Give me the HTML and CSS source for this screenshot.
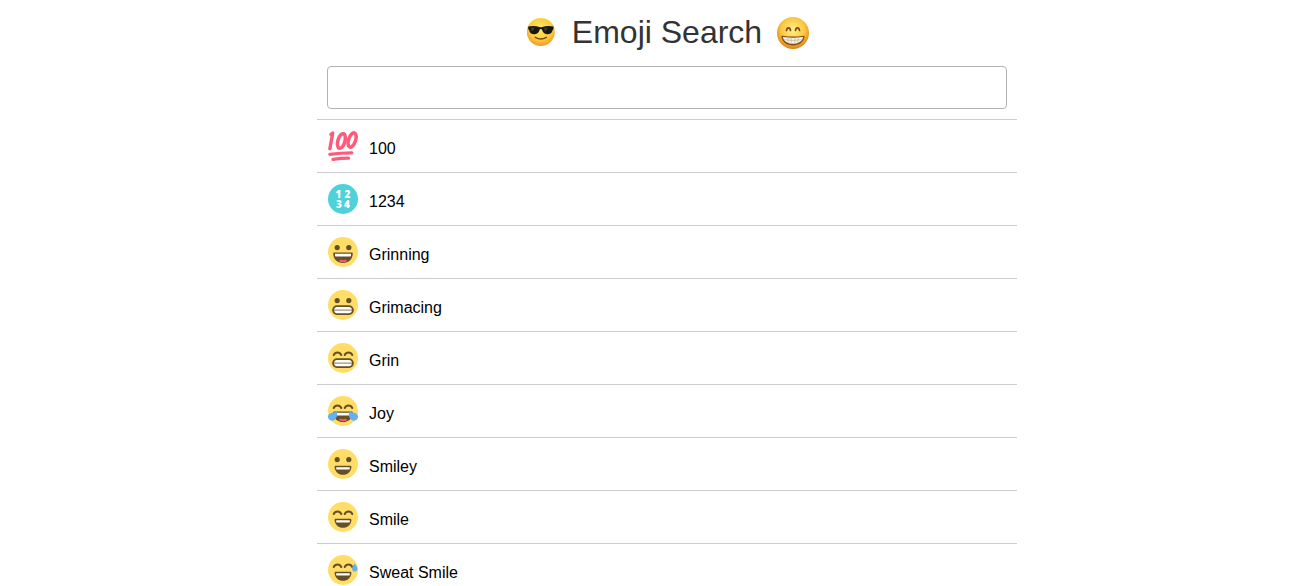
FILE: index.html
```html
<!DOCTYPE html>
<html lang="en">
<head>
<meta charset="utf-8">
<meta name="viewport" content="width=device-width, initial-scale=1">
<title>Emoji Search</title>
<link rel="stylesheet" href="styles.css">
</head>
<body>
<svg class="defs" aria-hidden="true">
  <defs>
    <radialGradient id="gold" cx=".5" cy=".38" r=".62">
      <stop offset="0" stop-color="#ffe864"/><stop offset=".65" stop-color="#fdcb3c"/><stop offset="1" stop-color="#f0982c"/>
    </radialGradient>
    <radialGradient id="amber" cx=".5" cy=".4" r=".62">
      <stop offset="0" stop-color="#fff08a"/><stop offset=".6" stop-color="#fbc740"/><stop offset="1" stop-color="#d97a10"/>
    </radialGradient>
    <g id="face"><circle cx="15" cy="15" r="15" fill="#ffdd67"/></g>
    <g id="dots" fill="#664e27"><circle cx="9.2" cy="10.6" r="2.6"/><circle cx="20.8" cy="10.6" r="2.6"/></g>
    <g id="arcs" fill="none" stroke="#664e27" stroke-width="2" stroke-linecap="round">
      <path d="M5.700 12C7.300 8.600 11.700 8.600 13.300 12M16.700 12C18.300 8.600 22.700 8.600 24.300 12"/>
    </g>
    <g id="open">
      <path d="M6.500 15.500h17c.9 0 1.300.5 1.300 1.200-.4 5.500-3.800 9.300-9.800 9.300s-9.400-3.800-9.800-9.300c0-.7.400-1.200 1.300-1.200z" fill="#664e27"/>
      <path d="M7 16.800h16v1.700c0 .6-.4 1-1 1H8c-.6 0-1-.4-1-1z" fill="#fff"/>
      <path d="M11 24.300c.5-1.700 2.600-1.800 4-1 1.400-.8 3.500-.7 4 1-2.200 1.200-5.800 1.200-8 0z" fill="#ff5575"/>
    </g>
    <g id="teeth">
      <rect x="4.200" y="15.300" width="21.600" height="9.700" rx="4.700" fill="#664e27"/>
      <path d="M9 17h12c1.700 0 2.800 1 2.800 2.700H6.200C6.200 18 7.300 17 9 17zM6.200 20.600h17.600c0 1.700-1.100 2.700-2.800 2.700H9c-1.700 0-2.800-1-2.800-2.700z" fill="#fff"/>
      <path d="M6.200 20.150h17.600" stroke="#bdb3a3" stroke-width="1"/>
    </g>
    <g id="smile">
      <path d="M8 16.800h14c1.100 0 1.600.7 1.400 1.600-.7 4.400-3.800 7.300-8.400 7.300s-7.700-2.900-8.400-7.300c-.2-.9.300-1.600 1.400-1.600z" fill="#664e27"/>
      <path d="M8.700 18.200h12.600c.5 0 .7.300.6.800l-.2.900c-.1.500-.4.700-.8.700H9.100c-.4 0-.7-.2-.8-.7l-.2-.9c-.1-.5.100-.8.600-.8z" fill="#fff"/>
    </g>
  </defs>
</svg>
<main class="app">
  <header class="header">
    <svg class="header-icon" viewBox="0 0 32 32" aria-hidden="true">
      <circle cx="15.800" cy="15" r="14" fill="url(#gold)"/>
      <path d="M3.200 9.500c4.300-.8 7.800-.7 11.200.5 1 .3 1.900.3 2.900 0 3.400-1.200 6.900-1.300 11.200-.5v2.400c-.8.600-.9 1.300-1.300 2.300-1 2.500-2.800 3.200-5.200 3-3-.2-4.300-2.100-4.900-4.500-.4-1-2.100-1-2.500 0-.6 2.400-1.900 4.300-4.900 4.500-2.400.2-4.200-.5-5.200-3-.4-1-.5-1.700-1.300-2.300z" fill="#171714"/>
      <path d="M6 11l4.200-.4-3.400 3.800zM19.300 11.200l4-.6-3.500 4z" fill="#45423a"/>
      <path d="M10.300 20.300q5.500 3.400 11 0" fill="none" stroke="#7b4217" stroke-width="1.500" stroke-linecap="round"/>
    </svg>
    <h1 class="title">Emoji Search</h1>
    <svg class="header-icon" viewBox="0 0 32 32" aria-hidden="true">
      <circle cx="16" cy="16" r="16" fill="url(#amber)"/>
      <path d="M9.500 13.500c.5-3.500 3.500-3.500 4 0M18.500 13.500c.5-3.500 3.500-3.500 4 0" fill="none" stroke="#80460f" stroke-width="1.700" stroke-linecap="round"/>
      <path d="M5.600 18.700q10.400 1.800 20.800 0c1 0 1.300.6 1.100 1.500-1 5-5.500 8.200-11.500 8.200S5.500 25.200 4.500 20.200c-.2-.9.100-1.500 1.100-1.500z" fill="#7d4a18"/>
      <path d="M6.300 20q9.700 1.600 19.400 0 .6 0 .3.900c-1.300 3.800-5.200 5.900-10 5.900S7.300 24.700 6 20.900q-.3-.9.300-.9z" fill="#f6f1e6"/>
      <path d="M6.600 22.700q9.400 1.500 18.800 0M10.600 20.500l.8 5.300M14 20.800l.3 5.900M18 20.800l-.3 5.900M21.400 20.500l-.8 5.300" fill="none" stroke="#bda987" stroke-width=".6"/>
    </svg>
  </header>
  <div class="search">
    <input class="search-input" type="text" aria-label="Search emoji">
  </div>
  <ul class="results">
    <li class="row">
      <svg class="emoji" viewBox="0 0 30 30" aria-hidden="true">
        <g fill="none" stroke="#ff5a79" stroke-linecap="round">
          <path d="M3 3.500L4.700 2 1.900 17.800" stroke-width="3.400" stroke-linejoin="round"/>
          <ellipse cx="13.400" cy="10" rx="3.500" ry="7.500" transform="rotate(16 13.400 10)" stroke-width="3.500"/>
          <ellipse cx="24.100" cy="9" rx="3.500" ry="7.500" transform="rotate(18 24.100 9)" stroke-width="3.500"/>
          <path d="M1.900 23.300Q13 21.800 23.800 21.800" stroke-width="3.300"/>
          <path d="M5 28.400Q13 27.200 20.600 27.200" stroke-width="3.200"/>
        </g>
      </svg>
      <span class="name">100</span>
    </li>
    <li class="row">
      <svg class="emoji" viewBox="0 0 30 30" aria-hidden="true">
        <circle cx="15" cy="15" r="15" fill="#4fd1d9"/>
        <g class="digits"><text x="10.500" y="14">1</text><text x="19.500" y="14">2</text><text x="11" y="24">3</text><text x="19" y="24">4</text></g>
      </svg>
      <span class="name">1234</span>
    </li>
    <li class="row">
      <svg class="emoji" viewBox="0 0 30 30" aria-hidden="true"><use href="#face"/><use href="#dots"/><use href="#open"/></svg>
      <span class="name">Grinning</span>
    </li>
    <li class="row">
      <svg class="emoji" viewBox="0 0 30 30" aria-hidden="true"><use href="#face"/><use href="#dots"/><use href="#teeth"/></svg>
      <span class="name">Grimacing</span>
    </li>
    <li class="row">
      <svg class="emoji" viewBox="0 0 30 30" aria-hidden="true"><use href="#face"/><use href="#arcs"/><use href="#teeth"/></svg>
      <span class="name">Grin</span>
    </li>
    <li class="row">
      <svg class="emoji" viewBox="0 0 30 30" aria-hidden="true"><use href="#face"/><use href="#arcs"/><use href="#open"/>
        <path d="M8.800 15.300c.8 3.300.2 6.500-1.700 8.200-2 1.800-5 1.500-6.400-.5-1.500-2.200-.6-4.700 1.700-5.700 2-.9 4.200-.7 6.400-2zM21.200 15.300c-.8 3.300-.2 6.500 1.700 8.200 2 1.800 5 1.500 6.400-.5 1.500-2.200.6-4.700-1.700-5.700-2-.9-4.200-.7-6.400-2z" fill="#65b1ef"/>
      </svg>
      <span class="name">Joy</span>
    </li>
    <li class="row">
      <svg class="emoji" viewBox="0 0 30 30" aria-hidden="true"><use href="#face"/><use href="#dots"/><use href="#smile"/></svg>
      <span class="name">Smiley</span>
    </li>
    <li class="row">
      <svg class="emoji" viewBox="0 0 30 30" aria-hidden="true"><use href="#face"/><use href="#arcs"/><use href="#smile"/></svg>
      <span class="name">Smile</span>
    </li>
    <li class="row">
      <svg class="emoji" viewBox="0 0 30 30" aria-hidden="true"><use href="#face"/><use href="#arcs"/><use href="#smile"/>
        <path d="M26.700 8.500c1 2 2.700 3.200 2.700 5.200 0 1.800-1.200 2.900-2.700 2.900S24 15.500 24 13.700c0-2 1.700-3.200 2.700-5.200z" fill="#65b1ef"/>
      </svg>
      <span class="name">Sweat Smile</span>
    </li>
  </ul>
</main>
</body>
</html>
```

FILE: styles.css
```css
* {
  box-sizing: border-box;
}

html {
  overflow: hidden;
}

body {
  margin: 0;
  padding-left: 25px;
  background: #fff;
  color: #000;
  font-family: "Liberation Sans", Arial, sans-serif;
  font-size: 16px;
}

.defs {
  display: block;
  width: 0;
  height: 0;
}

.app {
  max-width: 700px;
  margin: 0 auto;
}

.header {
  display: flex;
  justify-content: center;
  align-items: center;
  gap: 15px;
  padding-top: 14px;
}

.header-icon {
  width: 32px;
  height: 32px;
}

.title {
  margin: 0;
  color: #333;
  font-size: 32px;
  font-weight: 400;
  line-height: 37px;
}

.search {
  padding: 15px 10px 10px;
}

.search-input {
  display: block;
  width: 100%;
  height: 43px;
  padding: 4px 10px;
  border: 1px solid #b3b3b3;
  border-radius: 4px;
  background: #fff;
  font: inherit;
}

.results {
  margin: 0;
  padding: 0;
  list-style: none;
}

.row {
  display: flex;
  align-items: flex-end;
  gap: 11px;
  padding: 11px;
  border-top: 1px solid #ccc;
}

.emoji {
  display: block;
  width: 30px;
  height: 30px;
}

.name {
  line-height: 24px;
}

.digits {
  fill: #fff;
  font-family: "Open Sans", sans-serif;
  font-size: 10px;
  font-weight: 800;
  text-anchor: middle;
}
```
